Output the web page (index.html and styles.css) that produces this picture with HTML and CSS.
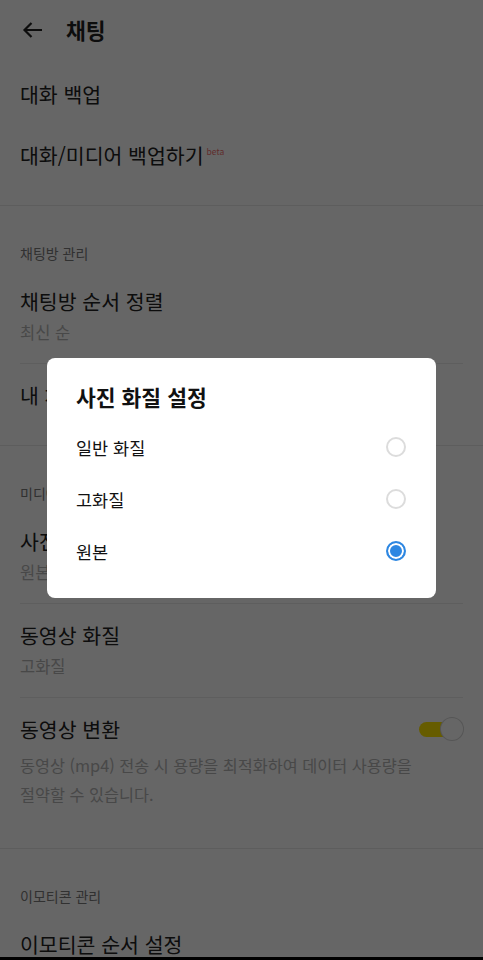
FILE: index.html
```html
<!DOCTYPE html>
<html lang="ko">
<head>
  <meta charset="UTF-8" />
  <title>채팅</title>
  <link rel="stylesheet" href="styles.css">
</head>
<body>
  <div class="screen">
    <div class="header">
      <svg class="back" width="22" height="18" viewBox="0 0 22 18">
        <path d="M21 9H3.5M10.5 2L3.5 9l7 7" fill="none" stroke="#222" stroke-width="2.2" />
      </svg>
      <div class="header-title">채팅</div>
    </div>

    <!-- 백업 -->
    <div class="section">
      <div class="item"><div class="title">대화 백업</div></div>
      <div class="item"><div class="title">대화/미디어 백업하기<sup class="beta">beta</sup></div></div>
    </div>

    <!-- 채팅방 관리 -->
    <div class="section">
      <div class="label">채팅방 관리</div>
      <div class="item line">
        <div class="title">채팅방 순서 정렬</div>
        <div class="sub">최신 순</div>
      </div>
      <div class="item"><div class="title">내 채팅방 설정</div></div>
    </div>

    <!-- 미디어 -->
    <div class="section">
      <div class="label">미디어 설정</div>
      <div class="item line">
        <div class="title">사진 화질</div>
        <div class="sub">원본</div>
      </div>
      <div class="item line">
        <div class="title">동영상 화질</div>
        <div class="sub">고화질</div>
      </div>
      <div class="item">
        <div class="title-row">
          <div class="title">동영상 변환</div>
          <div class="toggle"></div>
        </div>
        <div class="desc">동영상 (mp4) 전송 시 용량을 최적화하여 데이터 사용량을 절약할 수 있습니다.</div>
      </div>
    </div>

    <!-- 이모티콘 -->
    <div class="section">
      <div class="label">이모티콘 관리</div>
      <div class="item"><div class="title">이모티콘 순서 설정</div></div>
    </div>
  </div>

  <div class="dim">
    <div class="dialog">
      <div class="dialog-title">사진 화질 설정</div>
      <div class="option">
        <span>일반 화질</span>
        <span class="radio"></span>
      </div>
      <div class="option">
        <span>고화질</span>
        <span class="radio"></span>
      </div>
      <div class="option">
        <span>원본</span>
        <span class="radio checked"></span>
      </div>
    </div>
  </div>

  <div class="navbar"></div>
</body>
</html>
```

FILE: styles.css
```css
/* 채팅 설정 */
body {
  margin: 0;
  padding: 0;
  height: 960px;
  overflow: hidden;
  background-color: #ffffff;
  color: #222222;
  font-family: "Noto Sans CJK KR", "Noto Sans", sans-serif;
}

.screen {
  width: 483px;
}

.header {
  box-sizing: border-box;
  height: 63px;
  display: flex;
  align-items: center;
  padding: 0 0 4px 21px;
}

.back {
  margin-right: 23px;
}

.header-title {
  font-size: 21.5px;
  font-weight: 700;
  line-height: 28px;
}

.section {
  padding-bottom: 20px;
  border-bottom: 1px solid #e8e8e8;
}

.label {
  padding: 37px 20px 7px;
  font-size: 14px;
  line-height: 20px;
  color: #7a7a7a;
}

.item {
  padding: 17px 20px 16px;
}

.item.line {
  padding-bottom: 20px;
  margin: 0 20px;
  padding-left: 0;
  padding-right: 0;
  border-bottom: 1px solid #ececec;
}

.title {
  font-size: 20.5px;
  line-height: 28px;
}

.beta {
  font-size: 8.5px;
  color: #f07070;
  margin-left: 3px;
  vertical-align: 9px;
  line-height: 0;
}

.sub {
  margin-top: 6px;
  font-size: 16.5px;
  line-height: 22px;
  color: #b4b4b4;
}

.title-row {
  display: flex;
  justify-content: space-between;
  align-items: center;
}

.desc {
  margin-top: 8px;
  padding: 0 40px 3px 0;
  font-size: 16.3px;
  line-height: 29px;
  color: #b4b4b4;
  word-break: keep-all;
}

.toggle {
  position: relative;
  width: 44px;
  height: 22px;
}

.toggle::before {
  content: "";
  position: absolute;
  left: 0;
  right: 8px;
  top: 4px;
  height: 15px;
  border-radius: 8px;
  background-color: #fee500;
}

.toggle::after {
  content: "";
  position: absolute;
  right: 0;
  top: 0;
  width: 22px;
  height: 22px;
  border-radius: 50%;
  background-color: #ffffff;
  box-shadow: 0 0 0 1px #d6d6d6;
}

/* 팝업 */
.dim {
  position: fixed;
  inset: 0;
  background-color: rgba(0, 0, 0, 0.6);
  display: flex;
  align-items: center;
  justify-content: center;
}

.dialog {
  box-sizing: border-box;
  width: 389px;
  margin-bottom: 4px;
  padding: 25px 30px 21px 29px;
  background-color: #ffffff;
  border-radius: 8px;
  color: #111111;
}

.dialog-title {
  font-size: 21.5px;
  font-weight: 700;
  line-height: 28px;
  margin-bottom: 10px;
}

.option {
  height: 52px;
  display: flex;
  align-items: center;
  justify-content: space-between;
  font-size: 17.5px;
}

.radio {
  box-sizing: border-box;
  width: 20px;
  height: 20px;
  border-radius: 50%;
  border: 2px solid #dcdcdc;
}

.radio.checked {
  border-color: #2d87e2;
  background-color: #2d87e2;
  box-shadow: inset 0 0 0 2px #ffffff;
}

.navbar {
  position: fixed;
  left: 0;
  right: 0;
  bottom: 0;
  height: 3px;
  background-color: #000000;
}
```
